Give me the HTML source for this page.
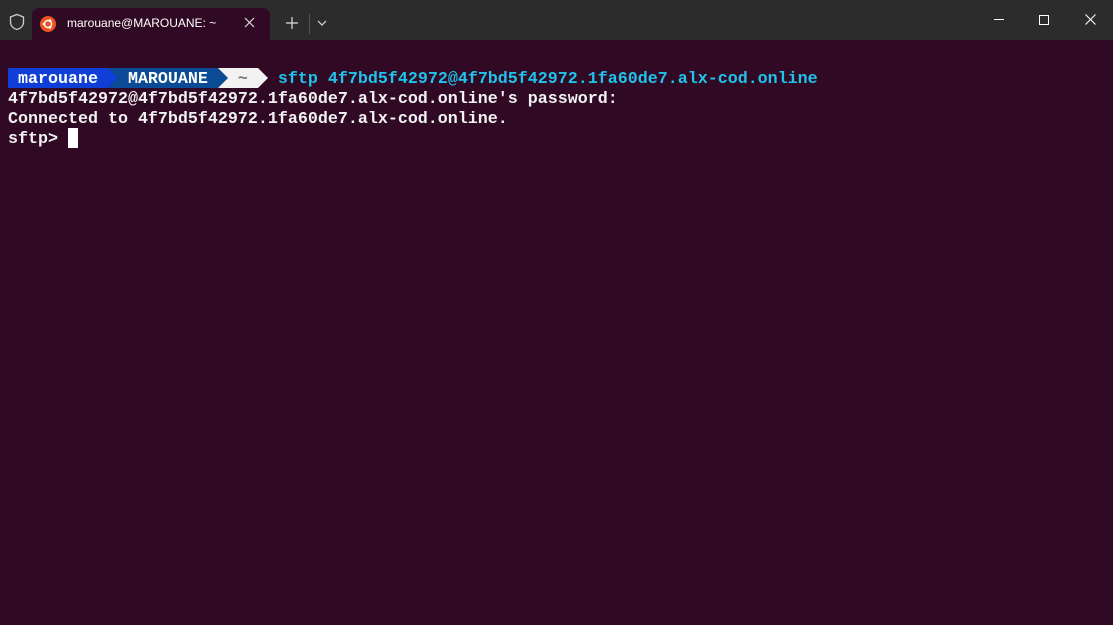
<!DOCTYPE html>
<html><head><style>
body{margin:0;width:1113px;height:625px;background:#300a24;overflow:hidden;font-family:"Liberation Sans",sans-serif;position:relative}
.bar{position:absolute;left:0;top:0;width:1113px;height:40px;background:#2c2c2c}
.tab{position:absolute;left:32px;top:8px;width:238px;height:32px;background:#300a24;border-radius:7px 7px 0 0}
.t{position:absolute;color:#fff;font-size:12px}
.term{position:absolute;left:8px;top:70px;font-family:"Liberation Mono",monospace;font-weight:bold;font-size:16.67px;line-height:20px;color:#f2f2f2;white-space:pre}
</style></head><body>
<div class="bar"></div>
<svg style="position:absolute;left:9px;top:13px" width="16" height="18" viewBox="0 0 16 18"><path d="M8 1.5 L14.5 4 V9 C14.5 13 11.5 15.5 8 16.5 C4.5 15.5 1.5 13 1.5 9 V4 Z" fill="none" stroke="#ccc" stroke-width="1.3"/></svg>
<div class="tab"></div>
<svg style="position:absolute;left:40px;top:16px" width="16" height="16" viewBox="0 0 16 16"><circle cx="8" cy="8" r="8" fill="#e95420"/><circle cx="8" cy="8" r="3.6" fill="none" stroke="#fff" stroke-width="1.4"/><circle cx="4" cy="8" r="1.4" fill="#fff"/><circle cx="10" cy="4.6" r="1.4" fill="#fff"/><circle cx="10" cy="11.4" r="1.4" fill="#fff"/></svg>
<div class="t" style="left:67px;top:16px">marouane@MAROUANE: ~</div>
<svg style="position:absolute;left:244px;top:17px" width="11" height="11"><path d="M1 1L10 10M10 1L1 10" stroke="#ddd" stroke-width="1.2"/></svg>
<svg style="position:absolute;left:286px;top:17px" width="12" height="12"><path d="M6 0V12M0 6H12" stroke="#ddd" stroke-width="1.2"/></svg>
<div style="position:absolute;left:309px;top:14px;width:1px;height:20px;background:#555"></div>
<svg style="position:absolute;left:317px;top:20px" width="10" height="6"><path d="M1 1L5 5L9 1" fill="none" stroke="#ddd" stroke-width="1.2"/></svg>
<div style="position:absolute;left:994px;top:19px;width:10px;height:1px;background:#fff"></div>
<div style="position:absolute;left:1039px;top:15px;width:8px;height:8px;border:1px solid #fff"></div>
<svg style="position:absolute;left:1085px;top:14px" width="11" height="11"><path d="M0.5 0.5L10.5 10.5M10.5 0.5L0.5 10.5" stroke="#fff" stroke-width="1.1"/></svg>
<svg style="position:absolute;left:8px;top:68px" width="262" height="20"><polygon points="0,0 100,0 110,10 100,20 0,20" fill="#0f3fd6"/><polygon points="100,0 210,0 220,10 210,20 100,20 110,10" fill="#0b4a94"/><polygon points="210,0 250,0 260,10 250,20 210,20 220,10" fill="#f2f2f2"/></svg>
<div class="term"><span style="color:#fff"> marouane   MAROUANE   <span style="color:#777">~</span>   </span><span style="color:#1fc3ec">sftp 4f7bd5f42972@4f7bd5f42972.1fa60de7.alx-cod.online</span>
4f7bd5f42972@4f7bd5f42972.1fa60de7.alx-cod.online's password:
Connected to 4f7bd5f42972.1fa60de7.alx-cod.online.
sftp> </div>
<div style="position:absolute;left:68px;top:128px;width:10px;height:20px;background:#fff"></div>
</body></html>
